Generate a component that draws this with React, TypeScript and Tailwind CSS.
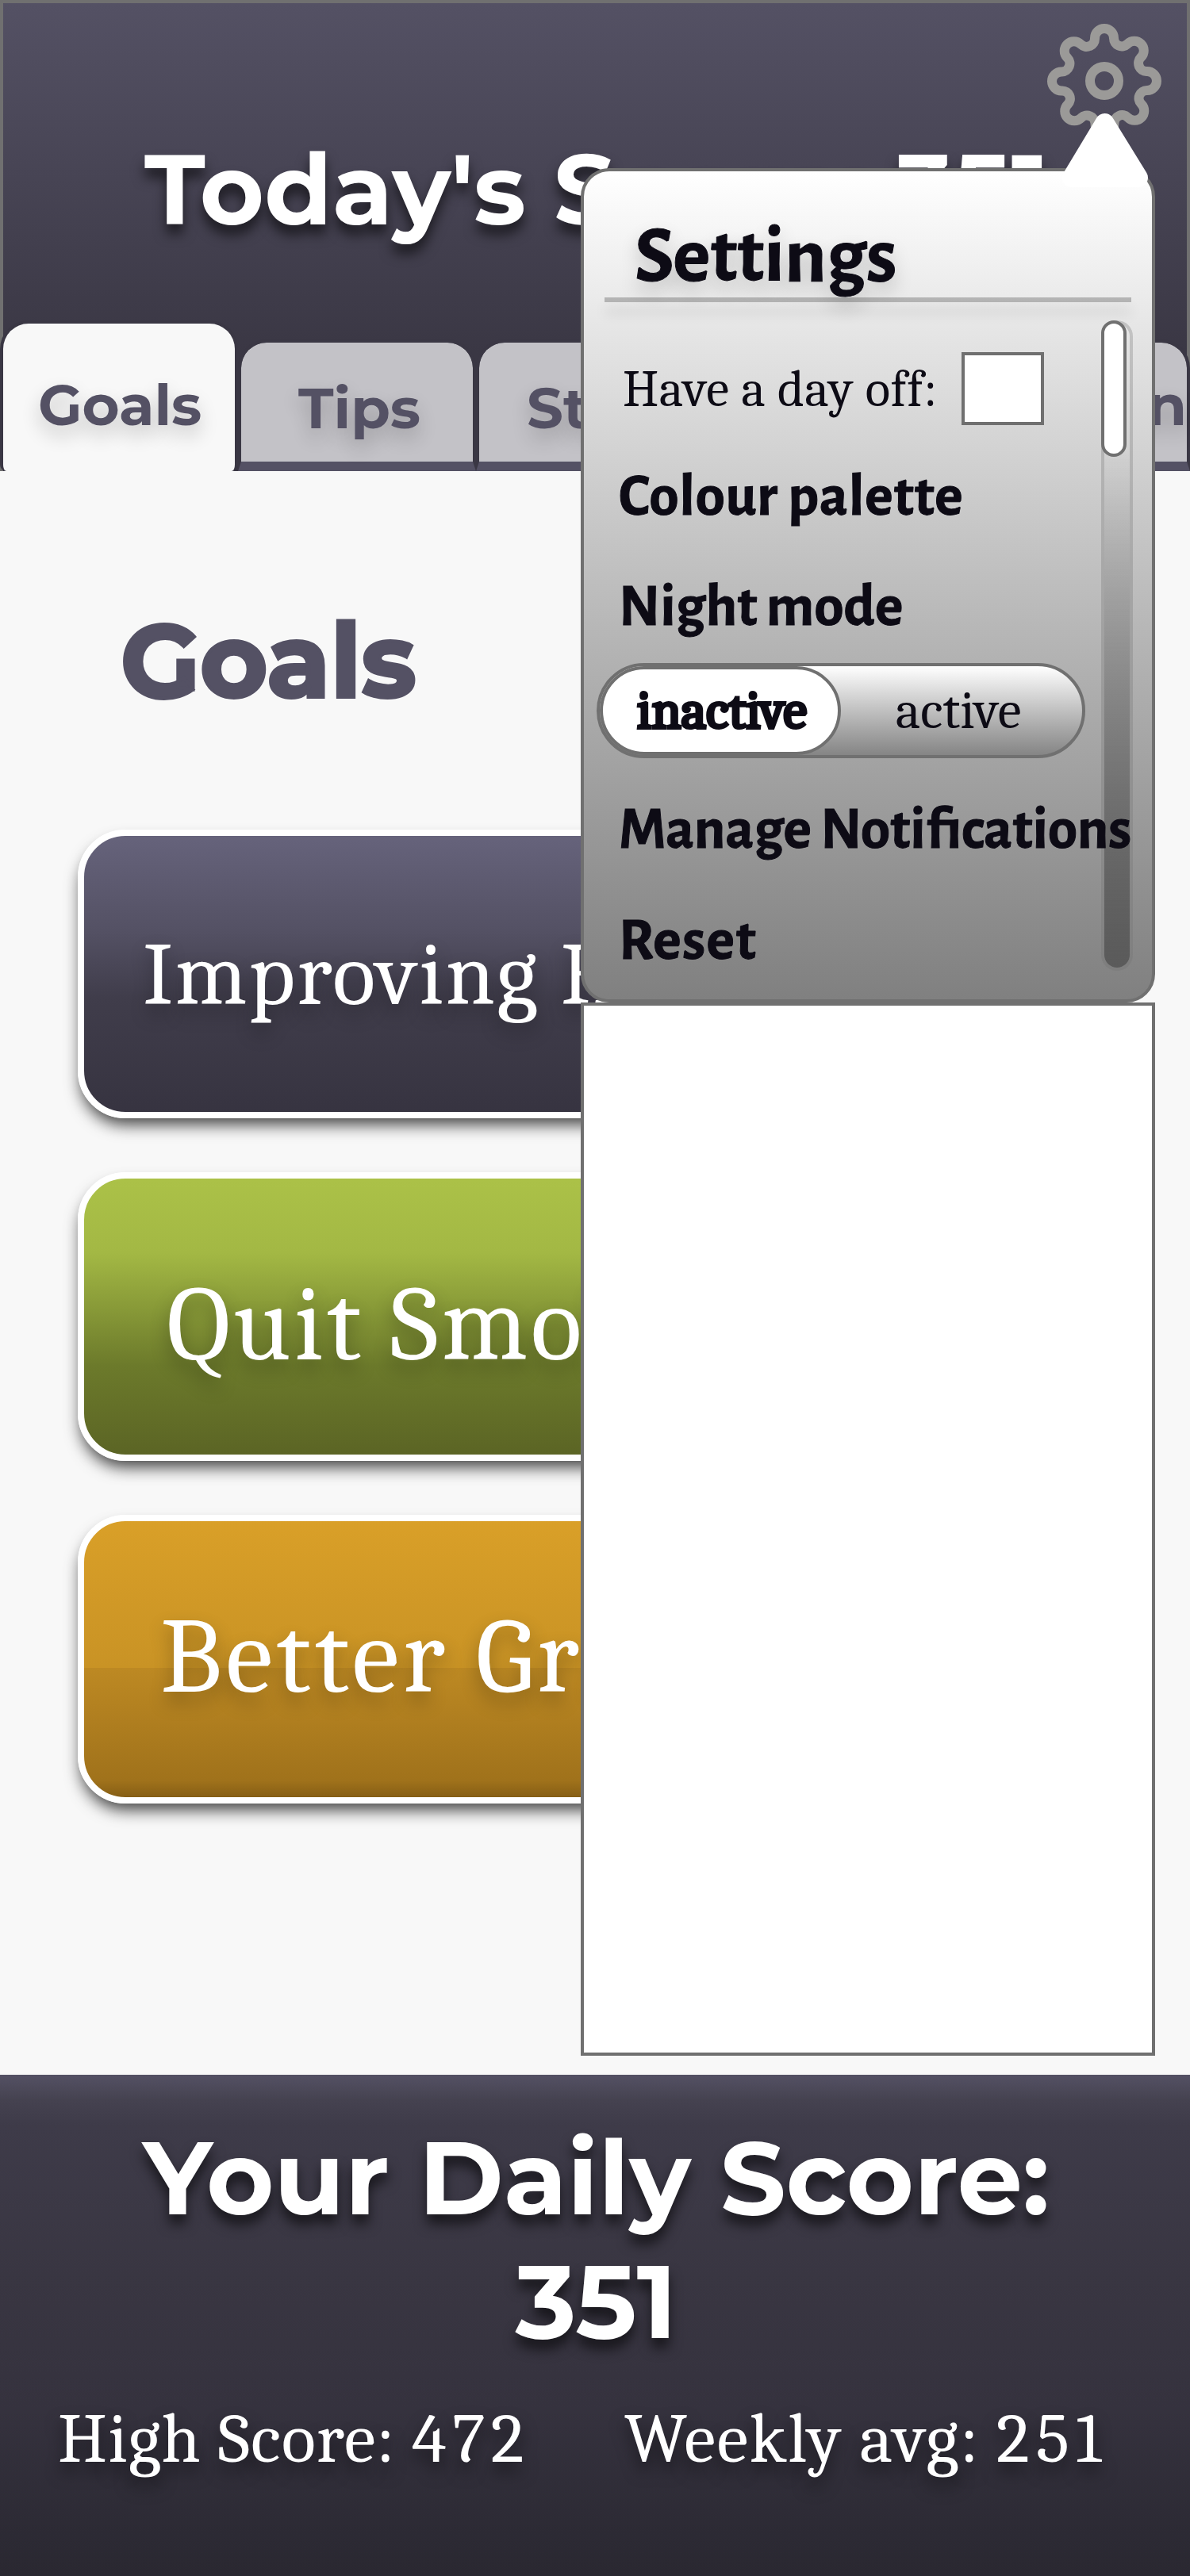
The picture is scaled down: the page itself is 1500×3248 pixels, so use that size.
import { FiSettings } from "react-icons/fi";

const tabBase =
  "h-[166px] w-[300px] rounded-t-[36px] border-4 border-b-[12px] border-[#3a3744] border-b-[#545164] bg-[#c3c2c7] bg-clip-padding leading-none";

function Tabs() {
  return (
    <nav className="-mx-1 flex items-end font-['Montserrat','Inter',sans-serif] text-[72px] leading-none font-bold text-[#545164] text-shadow-[0_12px_24px_rgba(0,0,0,0.2)]">
      <div className="h-[190px] w-[300px] rounded-t-[36px] rounded-b-[8px] border-x-4 border-t-4 border-[#3a3744] bg-[#f8f8f8] pt-[66px] pl-[44px]">Goals</div>
      <div className={tabBase}>
        <div className="pt-[46px] pl-[72px]">Tips</div>
      </div>
      <div className={tabBase}>
        <div className="pt-[46px] pl-[60px]">Stats</div>
      </div>
      <div className={tabBase}>
        <div className="pt-[46px] pl-[71px]">Log</div>
      </div>
      <div className={tabBase}>
        <div className="pt-[42px] text-right">Plan</div>
      </div>
    </nav>
  );
}

const card =
  "h-[364px] w-[1304px] rounded-[60px] border-8 border-white bg-origin-border leading-none text-white shadow-[0_12px_20px_-4px_rgba(0,0,0,0.74)] text-shadow-[0_12px_24px_rgba(0,0,0,0.3)]";

function Goals() {
  return (
    <main className="h-[2022px] bg-[#f8f8f8] pt-[174px]">
      <h1 className="ml-[152px] h-[130px] font-['Montserrat','Inter',sans-serif] text-[130px] leading-[130px] font-bold text-[#545164] [-webkit-text-stroke:4px_#545164]">Goals</h1>
      <div className="mt-[148px] ml-[98px] flex flex-col gap-[68px] font-['Caladea','Cambria','Liberation_Serif',serif]">
        <div className={`${card} bg-[linear-gradient(#67647d,#545164_35%,#403d4b_58%,#363340)] pt-[120px] pl-[74px] text-[112px] tracking-[2.2px]`}>Improving Health</div>
        <div className={`${card} bg-[linear-gradient(#acc248,#a3b844_28%,#6c7a2b_67%,#5a6324)] pt-[118px] pl-[104px] text-[134px] tracking-[3.7px]`}>Quit Smoking</div>
        <div className={`${card} bg-[linear-gradient(#daa028,#c99325_53%,#bd8923_53%,#a0721b_92%,#7c5713)] pt-[105px] pl-[96px] text-[134px] tracking-[4.8px]`}>
          Better Gr<span className="pl-[8px]">ades</span>
        </div>
      </div>
    </main>
  );
}

function Footer() {
  return (
    <footer className="h-[632px] bg-[linear-gradient(#545164,#454250_5%,#3e3b49_10%,#393642_40%,#35323e_67%,#2c2a34_92%,#2a2831)] pt-[52px] text-white">
      <div className="pl-[3px] text-center font-['Montserrat','Inter',sans-serif] text-[130px] leading-[156px] font-bold text-shadow-[0_12px_16px_rgba(0,0,0,0.6)]">
        <div>Your Daily Score:</div>
        <div>351</div>
      </div>
      <div className="mt-[51px] flex font-['Caladea','Cambria','Liberation_Serif',serif] text-[89px] leading-none tracking-[1.2px] whitespace-nowrap text-shadow-[0_12px_20px_rgba(0,0,0,0.5)]">
        <div className="w-[787px] pl-[73px]">
          High Score: <span className="tracking-[7px]">472</span>
        </div>
        <div className="tracking-[1.8px]">
          Weekly avg: <span className="tracking-[8px]">251</span>
        </div>
      </div>
    </footer>
  );
}

const label = "pl-[44px] text-[75px] leading-none whitespace-nowrap [-webkit-text-stroke:1px_#0d0b15]";

function SettingsPopover() {
  return (
    <>
      <div className="absolute top-[1264px] left-[732px] h-[1328px] w-[724px] border-4 border-[#707070] bg-white" />
      <section className="absolute top-[212px] left-[732px] h-[1052px] w-[724px] rounded-[36px] border-4 border-[#707070] bg-linear-to-b from-white to-[#808080] font-['Alegreya_Sans','Noto_Sans',sans-serif] font-bold text-[#0d0b15]">
        <div className="absolute top-[188px] left-[652px] h-[820px] w-[40px] rounded-full border-4 border-[#707070]/30 bg-[linear-gradient(transparent_20%,#5a5a5a)] bg-clip-padding" />
        <div className="absolute top-[188px] left-[652px] h-[172px] w-[32px] rounded-full border-4 border-[#707070] bg-white" />
        <h2 className="relative h-[159px] pt-[58px] pl-[64px] text-[100px] leading-none text-shadow-[0_12px_24px_rgba(0,0,0,0.2)] [-webkit-text-stroke:1px_#0d0b15]">Settings</h2>
        <div className="ml-[26px] h-[6px] w-[664px] bg-[#707070]/45 shadow-[0_14px_16px_rgba(0,0,0,0.12)]" />
        <div className="relative mt-[63px] flex h-[92px] font-['Caladea','Cambria','Liberation_Serif',serif] font-normal">
          <div className="w-[476px] pt-[15px] pl-[49px] text-[65px] leading-none tracking-[0.5px] whitespace-nowrap">Have a day off:</div>
          <div className="h-[92px] w-[104px] border-4 border-[#707070] bg-white" />
        </div>
        <div className={`${label} mt-[53px] tracking-[0.8px]`}>Colour palette</div>
        <div className={`${label} mt-[64px]`}>Night mode</div>
        <div className="mt-[33px] ml-[16px] flex h-[120px] w-[616px] rounded-full border-4 border-[#707070] bg-linear-to-b from-white to-[#858585] font-['Caladea','Cambria','Liberation_Serif',serif] text-[67px] leading-none font-normal">
          <div className="flex w-[304px] items-center justify-center rounded-full border-4 border-[#707070] bg-white pl-[4px] [-webkit-text-stroke:4px_#0d0b15]">inactive</div>
          <div className="flex flex-1 items-center justify-center pr-[8px]">active</div>
        </div>
        <div className={`${label} relative mt-[53px] word-spacing-normal`}>Manage Notifications</div>
        <div className={`${label} mt-[65px] tracking-[1.5px]`}>Reset</div>
      </section>
      <svg className="absolute top-[140px] left-[1336px]" width="116" height="100" viewBox="0 0 116 100">
        <path d="M56.500 15L15 84H99Z" fill="#fff" stroke="#fff" strokeWidth="24" strokeLinejoin="round" />
      </svg>
    </>
  );
}

export default function App() {
  return (
    <div className="relative h-[3248px] w-[1500px] overflow-hidden bg-[#f8f8f8]">
      <header className="flex h-[594px] flex-col justify-between border-x-4 border-t-4 border-[#707070] bg-[linear-gradient(#545164,#3a3744_75%,#3a3744)]">
        <div className="pt-[173px] pl-[178px] font-['Montserrat','Inter',sans-serif] text-[124px] leading-none font-bold whitespace-nowrap text-white text-shadow-[0_12px_16px_rgba(0,0,0,0.6)]">Today's Score: 351</div>
        <Tabs />
      </header>
      <FiSettings className="absolute top-[30px] left-[1320px] size-[144px] text-[#9b9a98]" />
      <Goals />
      <Footer />
      <SettingsPopover />
    </div>
  );
}
